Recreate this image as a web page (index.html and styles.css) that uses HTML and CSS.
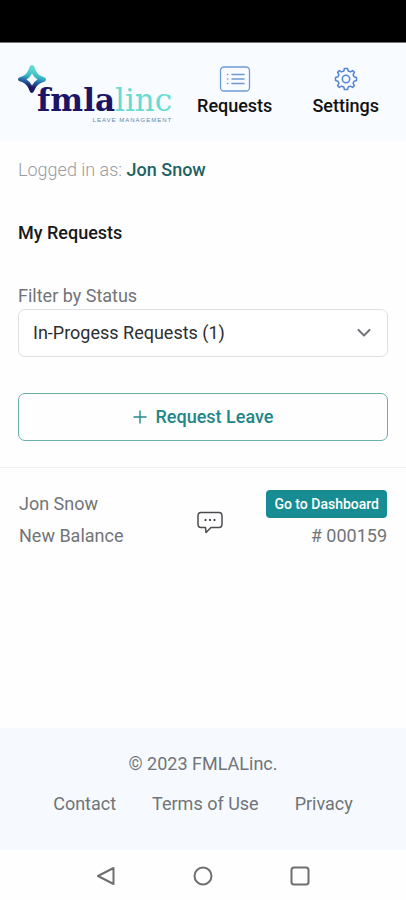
FILE: index.html
```html
<!DOCTYPE html>
<html lang="en">
<head>
<meta charset="utf-8">
<meta name="viewport" content="width=device-width, initial-scale=1">
<title>My Requests</title>
<link rel="stylesheet" href="styles.css">
</head>
<body>
<div class="status-bar"></div>
<header class="header">
  <a class="logo" href="#">
    <svg class="logo-mark" viewBox="0 0 28 28" aria-hidden="true">
      <defs>
        <linearGradient id="mark" x1="0.6" y1="0" x2="0.4" y2="1">
          <stop offset="0.15" stop-color="#5fd9d0"/>
          <stop offset="0.42" stop-color="#35b4c4"/>
          <stop offset="0.58" stop-color="#2869a8"/>
          <stop offset="0.8" stop-color="#1d1760"/>
        </linearGradient>
      </defs>
      <path fill="url(#mark)" fill-rule="evenodd" d="M14 0Q16 0 17 3.500Q19 9.500 24 11.500Q28 12.500 28 14.500Q28 16.500 24 17.500Q18.500 19.500 16.500 25Q15.500 28 14 28Q12 28 11 24.500Q9 19 4 17Q0 16 0 14.500Q0 12.500 4 11.500Q9 9.500 11 3.500Q12 0 14 0ZM14 8.500Q12 12.500 8.500 14.500Q12 16.500 14 20.500Q16 16.500 19.500 14.500Q16 12.500 14 8.500Z"/>
    </svg>
    <span class="logo-text">
      <span class="logo-word"><span class="logo-dark">fmla</span><span class="logo-light">linc</span></span>
      <span class="logo-tag">LEAVE MANAGEMENT</span>
    </span>
  </a>
  <nav class="nav">
    <a class="nav-link" href="#">
      <svg class="nav-icon" viewBox="0 0 32 26" fill="none" stroke="#6d9ad6" stroke-linecap="round" aria-hidden="true">
        <rect x="1.500" y="1" width="29" height="24" rx="3.500" stroke-width="1.300"/>
        <path stroke-width="1.500" d="M13 8.500h12M13 13h12M13 17.500h12M8.500 8.500h.3M8.500 13h.3M8.500 17.500h.3"/>
      </svg>
      Requests
    </a>
    <a class="nav-link" href="#">
      <svg class="nav-icon" viewBox="0 0 32 26" fill="none" stroke="#5585d6" stroke-width="1.500" stroke-linejoin="round" aria-hidden="true">
        <path d="M13.800 5L14.400 2.500H17.600L18.200 5L20.400 5.900L22.600 4.600L24.400 6.400L23.100 8.600L24 10.800L26.500 11.400V14.600L24 15.200L23.100 17.400L24.400 19.600L22.600 21.400L20.400 20.100L18.200 21L17.600 23.500H14.400L13.800 21L11.600 20.100L9.400 21.400L7.600 19.600L8.900 17.400L8 15.200L5.500 14.600V11.400L8 10.800L8.900 8.600L7.600 6.400L9.400 4.600L11.600 5.900Z"/>
        <circle cx="16" cy="13" r="3.700"/>
      </svg>
      Settings
    </a>
  </nav>
</header>
<main class="main">
  <section class="intro">
    <p class="login">Logged in as: <strong class="login-name">Jon Snow</strong></p>
    <h1 class="title">My Requests</h1>
    <label class="label" for="status">Filter by Status</label>
    <div class="select-wrap">
      <select class="select" id="status"><option>In-Progess Requests (1)</option></select>
      <svg class="chevron" viewBox="0 0 14 8" fill="none" stroke="#6f7377" stroke-width="2" stroke-linecap="round" stroke-linejoin="round" aria-hidden="true"><path d="M1.500 1L7 6.500L12.500 1"/></svg>
    </div>
    <button class="request" type="button">
      <svg class="plus" viewBox="0 0 14 14" stroke="#26888a" stroke-width="1.400" aria-hidden="true"><path d="M7 0.500V13.500M0.500 7H13.500"/></svg>
      Request Leave
    </button>
  </section>
  <section class="item">
    <div class="item-side"><span>Jon Snow</span><span>New Balance</span></div>
    <button class="chat" type="button" aria-label="Messages">
      <svg class="chat-icon" viewBox="0 0 26 24" aria-hidden="true">
        <path fill="none" stroke="#4a4c50" stroke-width="1.500" stroke-linejoin="round" d="M4 1.500H22Q25 1.500 25 5V13Q25 16.500 22 16.500H14L9 21.500L8.500 16.500H4Q1 16.500 1 13V5Q1 1.500 4 1.500Z"/>
        <g fill="#2a2b2e"><circle cx="8.500" cy="9" r="1.100"/><circle cx="13" cy="9" r="1.100"/><circle cx="17.500" cy="9" r="1.100"/></g>
      </svg>
    </button>
    <div class="item-side item-end">
      <a class="dashboard" href="#">Go to Dashboard</a>
      <span># 000159</span>
    </div>
  </section>
</main>
<footer class="footer">
  <p class="copy">© 2023 FMLALinc.</p>
  <nav class="footer-links"><a href="#">Contact</a><a href="#">Terms of Use</a><a href="#">Privacy</a></nav>
</footer>
<div class="system-nav">
  <button type="button" aria-label="Back"><svg viewBox="0 0 20 20"><path d="M17.500 2V18L2 10Z"/></svg></button>
  <button type="button" aria-label="Home"><svg viewBox="0 0 20 20"><circle cx="10" cy="10" r="8.500"/></svg></button>
  <button type="button" aria-label="Recent apps"><svg viewBox="0 0 20 20"><rect x="1.500" y="1.500" width="17" height="17" rx="2.500"/></svg></button>
</div>
</body>
</html>
```
FILE: styles.css
```css
* { box-sizing: border-box; }
body {
  margin: 0;
  min-height: 100vh;
  display: flex;
  flex-direction: column;
  background: #fefefe;
  color: #717477;
  font: 18px/24px Roboto, "Liberation Sans", sans-serif;
}
a { color: inherit; text-decoration: none; }
p, h1 { margin: 0; }
button { padding: 0; border: 0; background: none; font: inherit; cursor: pointer; }
svg { display: block; }

.status-bar { height: 43px; background: #000; border-bottom: 1px solid #777; }
.header {
  display: flex;
  justify-content: space-between;
  align-items: flex-start;
  padding: 22px 27px 18px 18px;
  background: #f8fbff;
}
.logo { display: flex; }
.logo-mark { width: 28px; height: 28px; flex: none; }
.logo-text { display: flex; flex-direction: column; margin: 18px 0 0 -9px; }
.logo-word { font: bold 31px/34px "DejaVu Serif", serif; }
.logo-dark { color: #1c1464; }
.logo-light { color: #68dcd2; font-weight: normal; }
.logo-tag {
  align-self: flex-end;
  color: #5f88aa;
  font: 6px/6px "Liberation Sans", sans-serif;
  letter-spacing: 1px;
}
.nav { display: flex; gap: 40px; margin-top: 1px; }
.nav-link {
  display: flex;
  flex-direction: column;
  align-items: center;
  gap: 2px;
  color: #111;
  font-weight: 500;
}
.nav-icon { width: 32px; height: 26px; }

.main { flex: 1; }
.intro {
  display: flex;
  flex-direction: column;
  padding: 17px 18px 26px;
  border-bottom: 1px solid #f1f2f4;
}
.login { color: #999c9f; font-weight: 300; }
.login-name { color: #1d6264; font-weight: 500; }
.title { margin-top: 39px; color: #17191c; font-size: 18px; font-weight: 500; }
.label { margin-top: 39px; }
.select-wrap { position: relative; margin-top: 1px; }
.select {
  appearance: none;
  display: block;
  width: 100%;
  height: 48px;
  padding: 0 40px 0 14px;
  border: 1px solid #dee0e2;
  border-radius: 7px;
  background: #fff;
  color: #2c2e31;
  font: inherit;
}
.chevron { position: absolute; top: 20px; right: 17px; width: 14px; height: 8px; pointer-events: none; }
.request {
  display: flex;
  justify-content: center;
  align-items: center;
  gap: 9px;
  height: 48px;
  margin-top: 36px;
  border: 1px solid #6aaea9;
  border-radius: 7px;
  color: #1f8689;
  font-weight: 500;
}
.plus { width: 14px; height: 14px; }

.item {
  display: grid;
  grid-template-columns: 1fr auto 1fr;
  align-items: center;
  padding: 22px 19px;
}
.item-side { display: flex; flex-direction: column; gap: 4px; line-height: 28px; }
.item-end { align-items: flex-end; }
.chat-icon { width: 26px; height: 24px; }
.chat { margin-top: 6px; margin-left: 14px; }
.dashboard {
  padding: 0 8px;
  border-radius: 4px;
  background: #178d93;
  color: #fff;
  font-size: 14px;
  font-weight: 500;
}

.footer {
  display: flex;
  flex-direction: column;
  align-items: center;
  gap: 16px;
  padding: 24px 18px 34px;
  background: #f6faff;
}
.footer-links { display: flex; gap: 36px; }
.system-nav {
  display: flex;
  justify-content: center;
  gap: 77px;
  padding: 16px 0 14px;
}
.system-nav svg { width: 20px; height: 20px; fill: none; stroke: #6f6f6f; stroke-width: 2; stroke-linejoin: round; }
```
